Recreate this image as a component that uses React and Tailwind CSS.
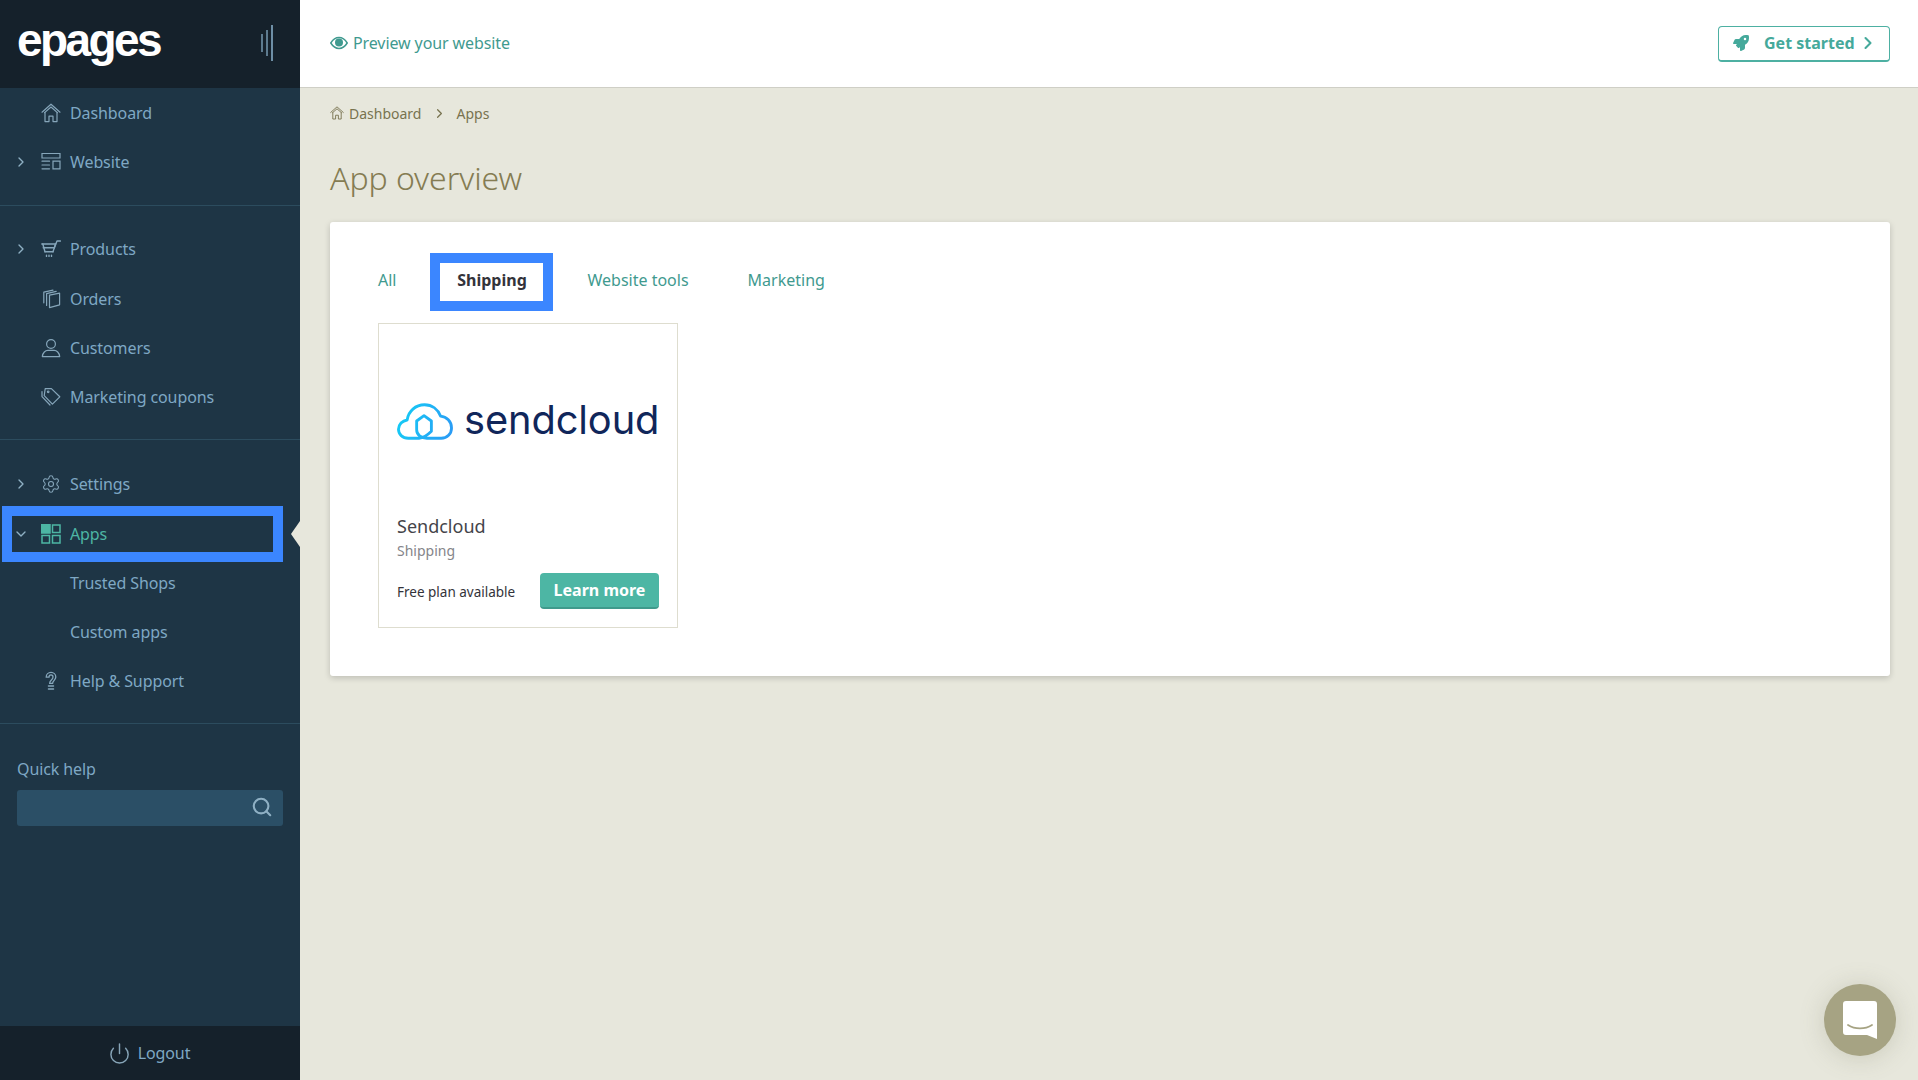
import React from "react";
import { ChevronRight, ChevronDown, Search, Power, Settings } from "lucide-react";
import { FaRocket } from "react-icons/fa";

const S = ({ children, size = 20, vb = "0 0 20 20", sw = 1.2, className = "" }) => (
  <svg width={size} height={size} viewBox={vb} fill="none" stroke="currentColor" strokeWidth={sw} strokeLinejoin="round" strokeLinecap="round" className={className}>
    {children}
  </svg>
);

const HomeIcon = ({ size = 20, sw = 1.2 }) => (
  <S size={size} sw={sw}>
    <path d="M1 9.2 10 1.2l9 8" />
    <path d="M3.6 9.6 10 4l6.4 5.6" />
    <path d="M4 9.5V18.6h4v-5.4h4v5.4h4V9.500" />
  </S>
);
const WebsiteIcon = () => (
  <S sw={1.2}>
    <path d="M1 1.500h18v4.500H1z" strokeLinejoin="miter" />
    <path d="M1 9.200h7.500M1 13h7.500M1 16.800h7.500" />
    <path d="M12 9.200h7v7.600h-7z" strokeLinejoin="miter" />
  </S>
);
const CartIcon = () => (
  <S sw={1.4}>
    <path d="M.8 5h13.700M2.200 8.800h11.200M4 12.800h8" />
    <path d="M1.800 5 4 12.800M14.500 5l-2.500 7.800" />
    <path d="M13.400 8.800 16 2h3.400" />
    <path d="M5.500 16.200v1.200M8 16.200v1.200M10.500 16.200v1.200" />
  </S>
);
const OrdersIcon = () => (
  <S sw={1.2}>
    <path d="M8.500 6.200 18.600 4.200v11.600L8.500 18.600z" />
    <path d="M5.600 16.400V4.600L15.200 2.400" />
    <path d="M2.800 13.800V3.200L12 1.200" />
  </S>
);
const UserIcon = () => (
  <S sw={1.2}>
    <circle cx="10" cy="6" r="4.400" />
    <path d="M1.300 18.600c.3-3.900 3.300-6.200 5.400-6.200h6.600c2.100 0 5.100 2.300 5.400 6.200z" />
  </S>
);
const TagIcon = () => (
  <S sw={1.2}>
    <path d="M4.200 1.600h6.200l8.400 8.200-7.400 7.400-8.200-8.600z" />
    <path d="M1 4.600v5l8 8.400" />
    <circle cx="7.200" cy="4.800" r=".8" />
  </S>
);
const AppsIcon = () => (
  <svg width="20" height="20" viewBox="0 0 20 20" fill="none" stroke="currentColor" strokeWidth="1.5">
    <rect x="0.500" y="0.500" width="8.500" height="8.500" fill="currentColor" />
    <rect x="11.500" y="1" width="7.500" height="7.500" />
    <rect x="1" y="11.500" width="7.500" height="7.500" />
    <rect x="11.500" y="11.500" width="7.500" height="7.500" />
  </svg>
);
const HelpIcon = () => (
  <S sw={1.3}>
    <path d="M5.200 6.200C5.200 3.400 7.400 1.400 10 1.400s4.800 2 4.800 4.600c0 3-3.200 3.600-3.200 6.400H8.600c0-3.200 3.400-3.600 3.400-6.400 0-1.200-.9-2.200-2-2.200S8 4.800 8 6.200z" />
    <path d="M7.400 15h5.200M7.400 18h5.200" />
  </S>
);
const EyeIcon = () => (
  <svg width="18" height="14" viewBox="0 0 18 14" fill="none" className="text-[#3f9a8f]">
    <path d="M.8 7C3 3.400 5.800 1.600 9 1.600S15 3.400 17.200 7C15 10.600 12.200 12.400 9 12.400S3 10.600.8 7z" stroke="currentColor" strokeWidth="1.500" />
    <circle cx="9" cy="6.600" r="4" fill="currentColor" />
  </svg>
);
const CloudLogo = () => (
  <svg width="56" height="37" viewBox="0.5 1.500 57 37" fill="none" strokeWidth="2.900" strokeLinecap="round" strokeLinejoin="round" className="shrink-0">
    <defs>
      <linearGradient id="cl" gradientUnits="userSpaceOnUse" x1="2" y1="10" x2="56" y2="30">
        <stop offset="0" stopColor="#14cdf5" />
        <stop offset="1" stopColor="#2a9cf5" />
      </linearGradient>
    </defs>
    <path stroke="url(#cl)" d="M23 37C27 37 31 34.500 35.500 30V19.500L28 14 20.500 19.500V28.500C20.500 33.500 25 37 31 37H45.500C51.500 37 56 32.500 56 26.500C56 20 51 15 44.800 14.500C42.200 7.500 36 3 28.500 3C19.500 3 12 9.500 10.800 18.500C6 19.200 2 23 2 28C2 33 6 37 12 37Z" />
  </svg>
);

const linkText = "text-[#7fa8c4]";
const Item = ({ icon, label, chev }) => (
  <div className={`h-[49.3px] flex items-center ${linkText}`}>
    <div className="w-[41px] flex items-center pl-[13px] shrink-0">
      {chev && <ChevronRight size={16} strokeWidth={2} className="text-[#8fb0c4]" />}
    </div>
    <div className="w-[20px] flex justify-center shrink-0 text-[#86a6ba]">{icon}</div>
    <span className="ml-[9px] tracking-[-0.1px]">{label}</span>
  </div>
);
const Divider = () => <div className="h-px bg-[#2c4c5e]" />;

export default function App() {
  return (
    <div className="flex h-screen overflow-hidden bg-[#e7e7dc] text-[16px] font-['Noto_Sans','Open_Sans',sans-serif]">
      <aside className="w-[300px] shrink-0 flex flex-col bg-[#1e3545]">
        <div className="h-[88px] bg-[#15212b] flex items-center justify-between pl-[17px] pr-[27px]">
          <span className="font-['Liberation_Sans',sans-serif] font-bold text-[46px] tracking-[-2.6px] text-white leading-none -mt-[8px]">epages</span>
          <div className="flex items-center gap-[3px] -mt-[2px]">
            <span className="w-[2px] h-[18px] bg-[#5d7b8f]" />
            <span className="w-[2px] h-[26px] bg-[#5d7b8f]" />
            <span className="w-[2px] h-[36px] bg-[#6e8fa6]" />
          </div>
        </div>
        <nav>
          <Item icon={<HomeIcon />} label="Dashboard" />
          <Item icon={<WebsiteIcon />} label="Website" chev />
          <div className="h-[18px]" />
          <Divider />
          <div className="h-[19px]" />
          <Item icon={<CartIcon />} label="Products" chev />
          <Item icon={<OrdersIcon />} label="Orders" />
          <Item icon={<UserIcon />} label="Customers" />
          <Item icon={<TagIcon />} label="Marketing coupons" />
          <div className="h-[17px]" />
          <Divider />
          <div className="h-[20px]" />
          <Item icon={<Settings size={22} strokeWidth={1.300} />} label="Settings" chev />
          <div className="h-[49.300px] flex items-center relative">
            <div className="ml-[12px] w-[261px] h-[36px] flex items-center outline-solid outline-[10px] outline-[#3b86ff]">
              <div className="w-[29px] flex pl-[1px]">
                <ChevronDown size={16} strokeWidth={2} className="text-[#8fb0c4]" />
              </div>
              <div className="w-[20px] flex justify-center text-[#4db6a4]"><AppsIcon /></div>
              <span className="ml-[9px] tracking-[-0.1px] text-[#4db6a4]">Apps</span>
            </div>
            <span className="absolute right-0 top-[12px] w-0 h-0 border-y-[13px] border-y-transparent border-r-[9px] border-r-[#e7e7dc]" />
          </div>
          <Item label="Trusted Shops" />
          <Item label="Custom apps" />
          <div className="-mt-px">
            <Item icon={<HelpIcon />} label="Help & Support" />
          </div>
          <div className="h-[18px]" />
          <Divider />
        </nav>
        <div className="px-[17px] pt-[33px]">
          <div className={`${linkText} tracking-[-0.1px]`}>Quick help</div>
          <div className="mt-[9px] h-[36px] rounded-[3px] bg-[#2b4f66] flex items-center justify-end pr-[10px] pb-[2px]">
            <Search size={22} strokeWidth={2.300} className="text-[#8fb0c4]" />
          </div>
        </div>
        <div className="flex-1" />
        <div className="h-[54px] bg-[#15212b] flex items-center justify-center gap-[7px] pr-[2px] text-[#7fa8c4]">
          <Power size={23} strokeWidth={1.500} className="text-[#87a5b8]" />
          <span className="tracking-[-0.1px]">Logout</span>
        </div>
      </aside>

      <main className="flex-1 min-w-0 flex flex-col">
        <header className="h-[88px] shrink-0 bg-white border-b border-b-[#cfcfc6] flex items-center justify-between pl-[30px] pr-[28px]">
          <div className="flex items-center gap-[5px] text-[#3f9a8f] -mt-[2px]">
            <EyeIcon />
            <span className="tracking-[-0.1px]">Preview your website</span>
          </div>
          <div className="w-[172px] h-[36px] rounded-[4px] border border-[#4db0a2] border-b-2 flex items-center pl-[14px] text-[#45a99b] font-bold">
            <FaRocket size={16} />
            <span className="ml-[15px]">Get started</span>
            <ChevronRight size={20} strokeWidth={2.500} className="ml-[3px]" />
          </div>
        </header>
        <div className="pl-[30px] pr-[28px] flex-1 relative">
          <div className="flex items-center pt-[12px] h-[38px] text-[14px] text-[#78734f]">
            <HomeIcon size={14} sw={1.300} />
            <span className="ml-[5px]">Dashboard</span>
            <ChevronRight size={15} strokeWidth={2} className="ml-[11px] mr-[9px]" />
            <span>Apps</span>
          </div>
          <h1 className="mt-[30px] text-[32px] leading-[44px] text-[#857c52] font-light tracking-[-0.05px]">App overview</h1>
          <section className="mt-[22px] h-[454px] bg-white rounded-[3px] shadow-[0_2px_6px_rgba(0,0,0,0.18)] pl-[48px] pt-[31px]">
            <div className="flex items-center h-[58px] text-[#3f9a8f] [&>span]:pb-[4px]">
              <span>All</span>
              <span className="ml-[44px] w-[103px] h-[38px] flex items-center justify-center font-bold text-[#33333a] outline-solid outline-[10px] outline-[#3b86ff]">Shipping</span>
              <span className="ml-[44px]">Website tools</span>
              <span className="ml-[59px]">Marketing</span>
            </div>
            <article className="mt-[12px] w-[300px] h-[305px] border border-[#deddcf] flex flex-col pl-[18px] pr-[18px]">
              <div className="h-[189px] pt-[5px] flex items-center gap-[11px]">
                <CloudLogo />
                <span className="font-['Inter',sans-serif] text-[39.800px] font-normal leading-none text-[#10265a] tracking-[-0.1px] -mt-[2px]">sendcloud</span>
              </div>
              <div className="text-[18px] leading-[26px] text-[#44444a]">Sendcloud</div>
              <div className="text-[14px] leading-[20px] mt-[2px] text-[#85858a]">Shipping</div>
              <div className="mt-[12px] flex items-center justify-between">
                <span className="text-[13.500px] text-[#33333a] mt-[2px]">Free plan available</span>
                <span className="w-[119px] h-[36px] rounded-[4px] bg-[#4db6a4] border-b-2 border-b-[#3f9a8c] flex items-center justify-center text-white font-bold">Learn more</span>
              </div>
            </article>
          </section>
          <div className="absolute right-[22px] bottom-[24px] w-[72px] h-[72px] rounded-full bg-[#a6a383] shadow-[0_2px_24px_rgba(120,118,90,0.25)] flex items-center justify-center">
            <svg width="34" height="38" viewBox="0 0 34 38" fill="none">
              <path d="M3 0h28a3 3 0 0 1 3 3v35l-10-4H3a3 3 0 0 1-3-3V3a3 3 0 0 1 3-3z" fill="#fff" />
              <path d="M5 24c7 4.500 17 4.500 24 0" stroke="#a6a383" strokeWidth="1.800" strokeLinecap="round" />
            </svg>
          </div>
        </div>
      </main>
    </div>
  );
}
